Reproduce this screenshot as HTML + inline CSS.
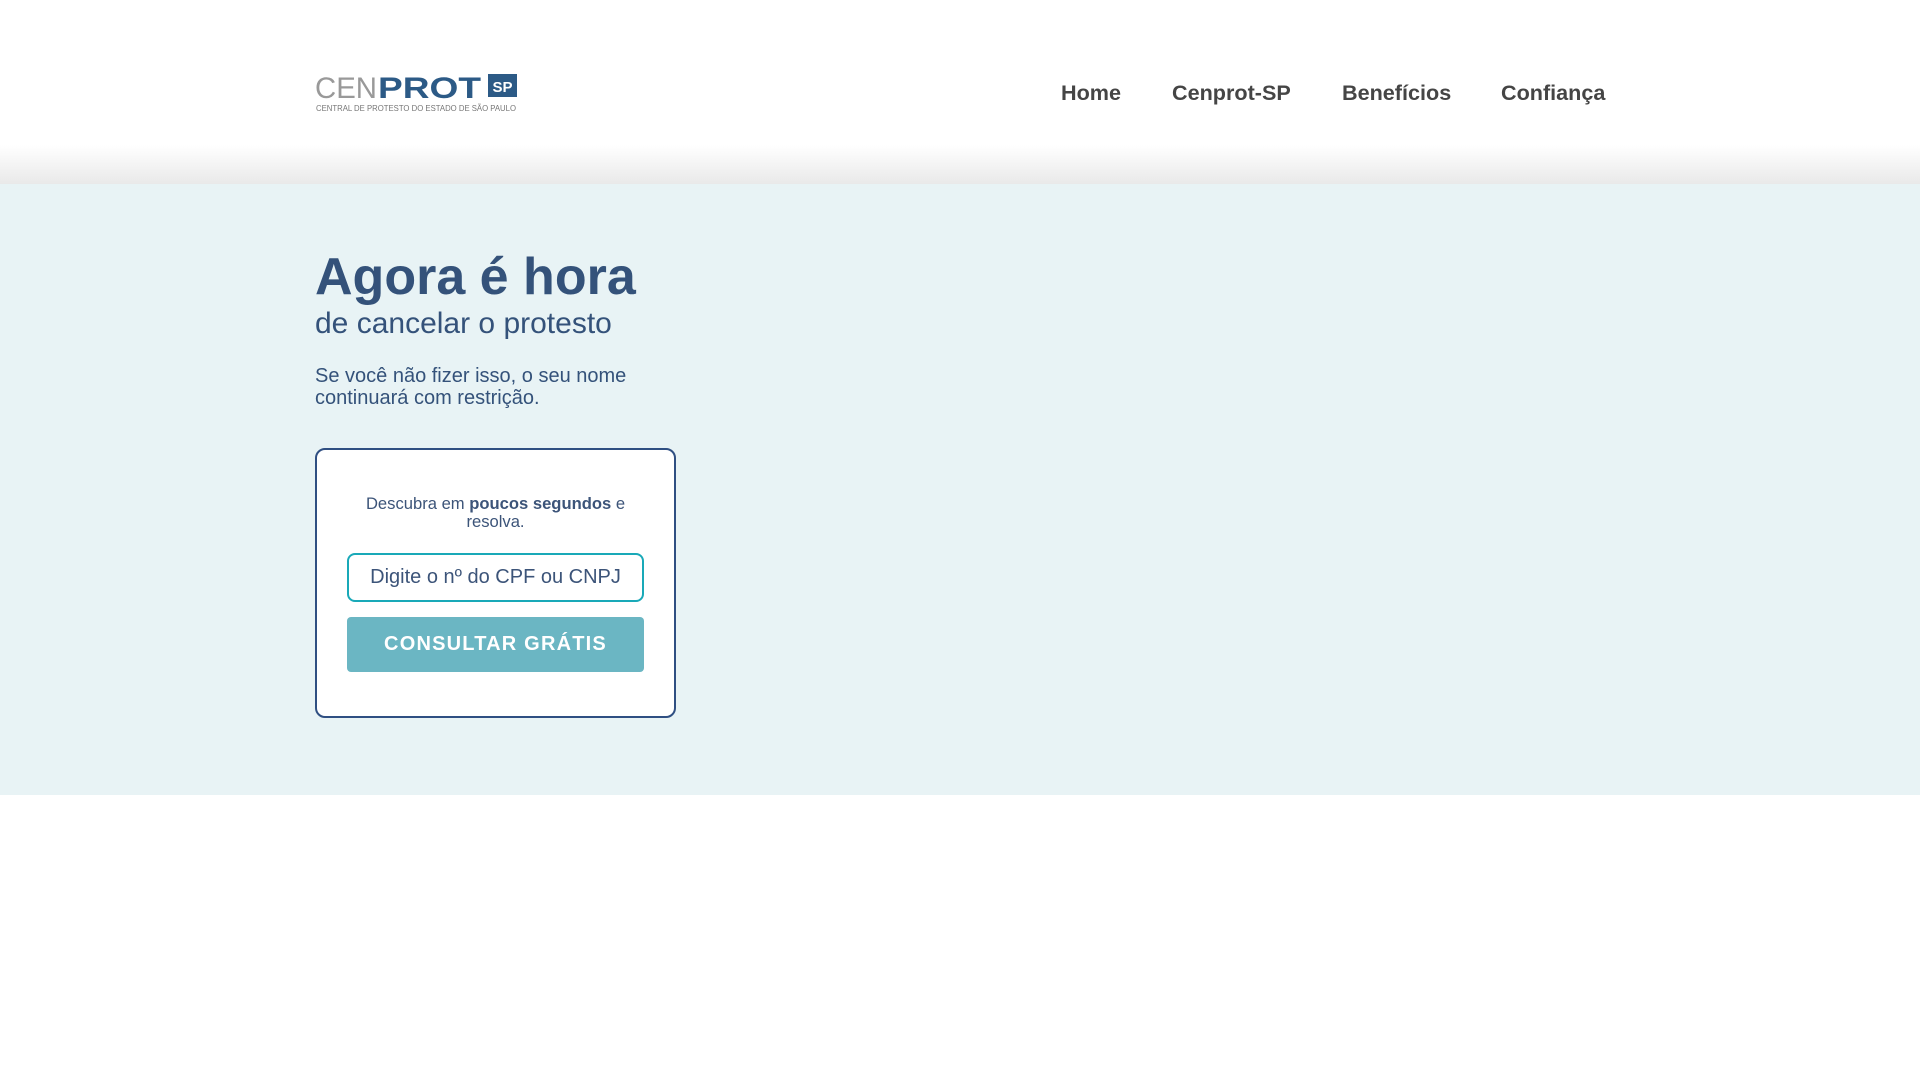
<!DOCTYPE html>
<html><head><meta charset="utf-8">
<style>
*{margin:0;padding:0;box-sizing:border-box}
body{width:1920px;height:1080px;background:#fff;font-family:"Liberation Sans",Arial,sans-serif;position:relative;overflow:hidden}
.header{position:absolute;left:0;top:0;width:1920px;height:184px;background:linear-gradient(#fff 0,#fff 145px,#e9e9e9 184px)}
.logo{position:absolute;left:315px;top:73px;width:202px;height:40px}
.nav{position:absolute;top:80px;font-size:21.6px;font-weight:bold;color:#454545;white-space:nowrap}
.hero{position:absolute;left:0;top:184px;width:1920px;height:611px;background:#e8f3f5}
.t1{position:absolute;left:315px;top:247px;font-size:52px;font-weight:bold;color:#34527a;line-height:60px}
.t2{position:absolute;left:315px;top:306px;font-size:30px;color:#34527a;line-height:36px}
.p{position:absolute;left:315px;top:365px;font-size:20px;color:#34527a;line-height:22px}
.card{position:absolute;left:315px;top:448px;width:361px;height:270px;background:#fff;border:2px solid #2f4f82;border-radius:10px}
.ct{position:absolute;left:0;width:357px;top:45px;text-align:center;font-size:16.6px;line-height:18px;color:#3c5479}
.inp{position:absolute;left:30px;top:103px;width:297px;height:49px;border:2px solid #19a9b8;border-radius:8px;font-size:20px;color:#3c5479;line-height:45px;text-align:center}
.btn{position:absolute;left:30px;top:167px;width:297px;height:55px;background:#6bb6c3;border-radius:4px;color:#fff;font-weight:bold;font-size:20px;letter-spacing:1.2px;text-align:center;line-height:55px}
</style></head><body>
<div class="header">
<svg class="logo" viewBox="0 0 202 40">
<text x="0" y="25" font-family="Liberation Sans" font-size="30" fill="#999" textLength="62" lengthAdjust="spacingAndGlyphs">CEN</text>
<text x="63" y="25" font-family="Liberation Sans" font-size="30" fill="#2c5a86" font-weight="bold" textLength="103" lengthAdjust="spacingAndGlyphs">PROT</text>
<rect x="173" y="1" width="29" height="23" fill="#2c5a86"/>
<text x="187.5" y="19" text-anchor="middle" font-family="Liberation Sans" font-size="15" fill="#fff" font-weight="bold">SP</text>
<text x="1" y="38" font-family="Liberation Sans" font-size="8" fill="#777" textLength="200" lengthAdjust="spacingAndGlyphs">CENTRAL DE PROTESTO DO ESTADO DE SÃO PAULO</text>
</svg>
<div class="nav" style="left:1061px">Home</div>
<div class="nav" style="left:1172px">Cenprot-SP</div>
<div class="nav" style="left:1342px">Benefícios</div>
<div class="nav" style="left:1501px">Confiança</div>
</div>
<div class="hero"></div>
<div class="t1">Agora é hora</div>
<div class="t2">de cancelar o protesto</div>
<div class="p">Se você não fizer isso, o seu nome<br>continuará com restrição.</div>
<div class="card">
<div class="ct">Descubra em <b>poucos segundos</b> e<br>resolva.</div>
<div class="inp">Digite o nº do CPF ou CNPJ</div>
<div class="btn">CONSULTAR GRÁTIS</div>
</div>
</body></html>
